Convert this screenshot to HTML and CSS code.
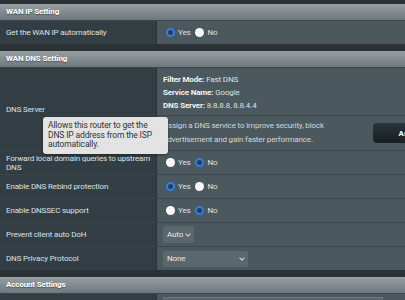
FILE: index.html
```html
<!DOCTYPE html>
<html lang="en">
<head>
    <meta charset="UTF-8">
    <title>WAN - Internet Connection</title>
    <link rel="stylesheet" href="styles.css">
</head>
<body>
    <div class="page">
        <div class="section">
            <div class="section-head">WAN IP Setting</div>
            <div class="row">
                <div class="label">Get the WAN IP automatically</div>
                <div class="value">
                    <label class="radio"><span class="dot checked"></span>Yes</label>
                    <label class="radio"><span class="dot"></span>No</label>
                </div>
            </div>
        </div>

        <div class="section">
            <div class="section-head">WAN DNS Setting</div>
            <div class="row row-dns">
                <div class="label">DNS Server</div>
                <div class="value value-stack">
                    <div class="dns-info">
                        <div><b>Filter Mode:</b> Fast DNS</div>
                        <div><b>Service Name:</b> Google</div>
                        <div><b>DNS Server:</b> 8.8.8.8, 8.8.4.4</div>
                    </div>
                    <div class="dns-assign">
                        <div class="dns-desc">Assign a DNS service to improve security, block advertisement and gain faster performance.</div>
                        <button class="btn-dark">Assign</button>
                    </div>
                </div>
            </div>
            <div class="row">
                <div class="label">Forward local domain queries to upstream DNS</div>
                <div class="value">
                    <label class="radio"><span class="dot"></span>Yes</label>
                    <label class="radio"><span class="dot checked"></span>No</label>
                </div>
            </div>
            <div class="row">
                <div class="label">Enable DNS Rebind protection</div>
                <div class="value">
                    <label class="radio"><span class="dot checked"></span>Yes</label>
                    <label class="radio"><span class="dot"></span>No</label>
                </div>
            </div>
            <div class="row">
                <div class="label">Enable DNSSEC support</div>
                <div class="value">
                    <label class="radio"><span class="dot"></span>Yes</label>
                    <label class="radio"><span class="dot checked"></span>No</label>
                </div>
            </div>
            <div class="row">
                <div class="label">Prevent client auto DoH</div>
                <div class="value">
                    <div class="select select-short">Auto <span class="chev"></span></div>
                </div>
            </div>
            <div class="row">
                <div class="label">DNS Privacy Protocol</div>
                <div class="value">
                    <div class="select select-long">None <span class="chev"></span></div>
                </div>
            </div>
        </div>

        <div class="section">
            <div class="section-head">Account Settings</div>
            <div class="row">
                <div class="label"></div>
                <div class="value value-top">
                    <div class="text-input"></div>
                </div>
            </div>
        </div>

        <div class="tooltip">Allows this router to get the DNS IP address from the ISP automatically.</div>
    </div>
</body>
</html>
```

FILE: styles.css
```css
body {
    margin: 0;
    background-color: #2a3236;
    font-family: 'Roboto', 'Liberation Sans', sans-serif;
    font-size: 8px;
    letter-spacing: -0.15px;
    color: #dde2e4;
    overflow: hidden;
}

.page {
    position: relative;
    width: 460px;
    padding-top: 4px;
}

.section {
    margin-bottom: 7px;
}

.section-head {
    height: 16px;
    line-height: 16px;
    padding-left: 6px;
    background: linear-gradient(#979fa3, #6e777b);
    color: #ffffff;
    font-weight: bold;
    text-shadow: 0 1px 1px rgba(0, 0, 0, 0.4);
}

.row {
    display: grid;
    grid-template-columns: 157px 1fr;
    min-height: 23px;
    border-top: 1px solid #3b464b;
}

.row-dns {
    min-height: 82px;
}

.label {
    display: flex;
    align-items: center;
    padding: 0 3px 0 6px;
    background-color: #323e43;
    border-right: 1px solid #2a3438;
    line-height: 9px;
}

.value {
    display: flex;
    align-items: center;
    padding-left: 6px;
    background-color: #4b585d;
}

.value-stack {
    flex-direction: column;
    align-items: stretch;
    padding-left: 0;
}

.value-top {
    align-items: flex-start;
    padding-top: 3px;
}

.dns-info {
    padding: 5px 6px 3px;
    line-height: 13px;
    border-bottom: 1px solid #3b464b;
}

.dns-info b {
    color: #f2f4f5;
}

.dns-assign {
    flex: 1;
    display: flex;
    align-items: center;
    padding-left: 6px;
}

.dns-desc {
    width: 170px;
    line-height: 14px;
    color: #d2d8da;
}

.btn-dark {
    margin-left: 40px;
    width: 76px;
    height: 20px;
    border: none;
    border-radius: 4px;
    background: linear-gradient(#2a3438, #192023);
    color: #ffffff;
    font-family: inherit;
    font-size: 8px;
    font-weight: bold;
}

.radio {
    display: flex;
    align-items: center;
    margin-right: 2px;
}

.dot {
    width: 9px;
    height: 9px;
    margin: 0 3px 0 3px;
    border-radius: 50%;
    background-color: #ffffff;
    box-sizing: border-box;
}

.dot.checked {
    background-color: #2a3d4f;
    border: 2px solid #2f7fef;
}

.select {
    display: flex;
    align-items: center;
    justify-content: space-between;
    height: 17px;
    padding: 0 4px;
    background-color: #5a686d;
    border-radius: 2px;
    box-sizing: border-box;
    color: #e4e8e9;
}

.select-short {
    width: 31px;
}

.select-long {
    width: 85px;
    height: 16px;
}

.chev {
    width: 3px;
    height: 3px;
    margin-bottom: 2px;
    border-right: 1px solid #d5dadc;
    border-bottom: 1px solid #d5dadc;
    transform: rotate(45deg);
}

.text-input {
    width: 218px;
    height: 16px;
    background-color: #5a686d;
    border: 1px solid #6b787c;
}

.tooltip {
    position: absolute;
    left: 43px;
    top: 117px;
    width: 115px;
    padding: 4px 5px;
    background-color: #e3e3e3;
    color: #333333;
    border-radius: 3px;
    font-size: 8.5px;
    line-height: 9.5px;
    box-shadow: 0 1px 3px rgba(0, 0, 0, 0.4);
}
```
